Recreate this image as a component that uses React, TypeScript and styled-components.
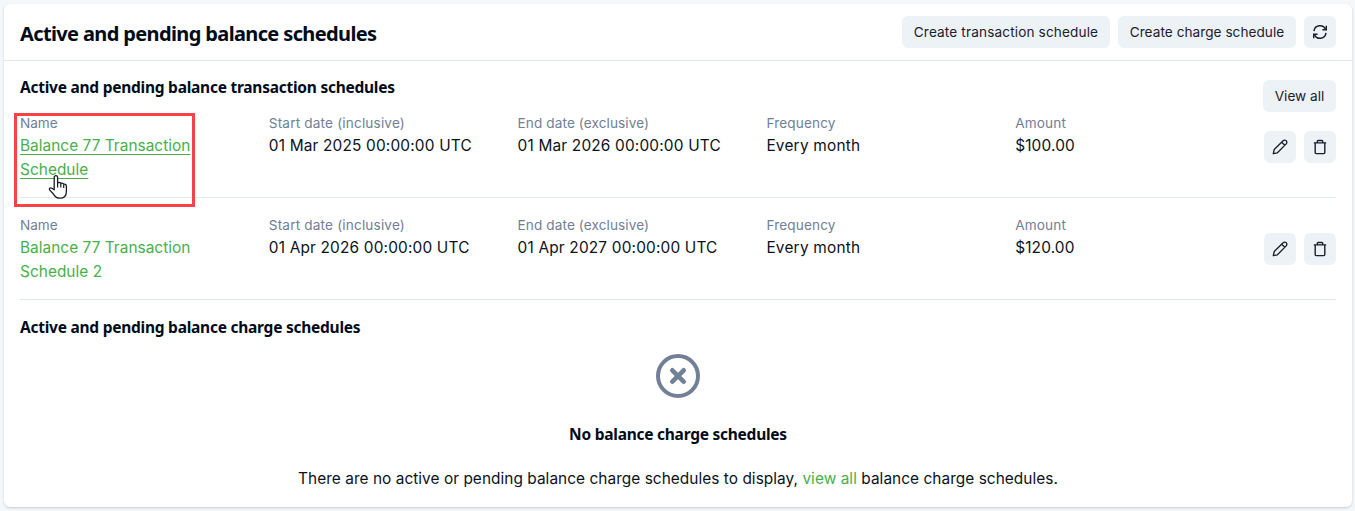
import React from 'react';
import styled, { createGlobalStyle } from 'styled-components';

const Global = createGlobalStyle`
  *, *::before, *::after { box-sizing: border-box; }
  body {
    margin: 0;
    background: #f5f8fb;
    color: #0b1220;
    font: 15.4px/24px Inter, "Liberation Sans", sans-serif;
  }
  h1, h2, h3, p { margin: 0; }
`;

const Page = styled.div`
  height: 511px;
  padding: 4px 3px 4px 4px;
  overflow: hidden;
`;

const Card = styled.section`
  height: 503px;
  background: #fff;
  border-radius: 6px;
  box-shadow: 0 1px 3px rgba(0, 0, 0, 0.12), 0 1px 2px rgba(0, 0, 0, 0.07);
`;

const Header = styled.header`
  display: flex;
  align-items: center;
  justify-content: space-between;
  height: 57px;
  padding: 0 16px;
  border-bottom: 1px solid #e2e8f0;
`;

const Title = styled.h1`
  padding-top: 4px;
  color: #020b1a;
  font: 700 20px/28px "Noto Sans", sans-serif;
  letter-spacing: -0.63px;
  white-space: nowrap;
`;

const Subtitle = styled.h2`
  color: #020b1a;
  font: 700 15.5px/24px "Noto Sans", sans-serif;
  letter-spacing: -0.25px;
  white-space: nowrap;
`;

const Toolbar = styled.div`
  display: flex;
  gap: 8px;
`;

const Button = styled.button<{ $width?: number; $track?: number }>`
  display: inline-flex;
  align-items: center;
  justify-content: center;
  flex: none;
  width: ${(p) => p.$width ?? 32}px;
  height: 32px;
  padding: 0;
  border: 0;
  border-radius: 6px;
  background: #edf2f7;
  color: #1a202c;
  font: 400 13.6px/20px Inter, sans-serif;
  letter-spacing: ${(p) => p.$track ?? 0}px;
  white-space: nowrap;
`;

const Body = styled.div`
  padding: 15px 16px 0;
`;

const SectionHead = styled.div`
  display: flex;
  justify-content: space-between;
  height: 36px;

  ${Subtitle} { line-height: 23px; }
  ${Button} { margin-top: 4px; }
`;

const Row = styled.div<{ $first?: boolean }>`
  display: grid;
  grid-template-columns: repeat(5, 248.8px) 1fr;
  height: ${(p) => (p.$first ? 86 : 102)}px;
  padding-top: ${(p) => (p.$first ? 0 : 16)}px;
  border-bottom: 1px solid #e2e8f0;
`;

const Field = styled.div`
  position: relative;
`;

const Label = styled.div<{ $track: number }>`
  height: 22px;
  font-size: 13.6px;
  line-height: 23px;
  letter-spacing: ${(p) => p.$track}px;
  color: #718096;
`;

const Value = styled.div<{ $track: number }>`
  letter-spacing: ${(p) => p.$track}px;
  white-space: nowrap;
`;

const Link = styled.a<{ $hovered?: boolean }>`
  color: #48b04b;
  text-decoration: ${(p) => (p.$hovered ? 'underline' : 'none')};
  text-decoration-thickness: 1px;
  text-underline-offset: 3px;
  text-decoration-skip-ink: none;
`;

const Actions = styled.div`
  display: flex;
  justify-content: flex-end;
  gap: 8px;
  padding-top: 19px;
`;

const Highlight = styled.div`
  position: absolute;
  left: -6px;
  top: 1px;
  width: 181px;
  height: 94px;
  border: 3px solid #f64244;
`;

const Cursor = styled.svg`
  position: absolute;
  left: 28px;
  top: 62px;
`;

const ChargeHead = styled.div`
  padding-top: 15px;
`;

const Empty = styled.div`
  display: flex;
  flex-direction: column;
  align-items: center;
  padding-top: 15px;

  h2 { margin-top: 24px; }
  p { margin-top: 21px; white-space: nowrap; }
`;

const Message = styled.p`
  letter-spacing: 0.05px;
`;

const RefreshIcon = () => (
  <svg width="16" height="16" viewBox="0 0 16 16" fill="none" stroke="currentColor" strokeWidth="1.45">
    <path d="M2 7.1A6 6 0 0 1 13.5 5.4M14 8.9A6 6 0 0 1 2.5 10.6" />
    <path d="M14.3 1.8v3.9h-3.9M1.7 14.2v-3.9h3.9" />
  </svg>
);

const PencilIcon = () => (
  <svg width="16" height="16" viewBox="0 0 16 16" fill="none" stroke="currentColor" strokeWidth="1.35" strokeLinejoin="round">
    <path d="M1.3 14.7l.9-4.1L11.1 1.8a2.1 2.1 0 0 1 3.1 0 2.1 2.1 0 0 1 0 3.1L5.4 13.8zM9.7 3.2l3.1 3.1" />
  </svg>
);

const TrashIcon = () => (
  <svg width="16" height="16" viewBox="0 0 16 16" fill="none" stroke="currentColor" strokeWidth="1.4" strokeLinejoin="round">
    <path d="M1.8 3.9h12.4M3.2 4v9.6a1 1 0 0 0 1 1h7.6a1 1 0 0 0 1-1V4M5.3 3.8V2.3a.8.8 0 0 1 .8-.8h3.8a.8.8 0 0 1 .8.8v1.5" />
  </svg>
);

const EmptyIcon = () => (
  <svg width="44" height="44" viewBox="0 0 44 44" fill="none" stroke="#718096" strokeWidth="4">
    <circle cx="22" cy="22" r="20" />
    <path d="M16.3 16.3l11.4 11.4M27.7 16.3L16.3 27.7" strokeWidth="4.6" strokeLinecap="round" />
  </svg>
);

const HandCursor = () => (
  <Cursor width="20" height="26" viewBox="0 0 20 26">
    <path
      d="M6.2 15.8V3.3a1.7 1.7 0 0 1 3.4 0v6.1c.2-1.5 3-1.5 3.2.5.4-1.2 2.9-1 3 .8.6-.9 2.6-.5 2.6 1.3v5.2c0 4.3-2.3 7-6.500 7-3.4 0-4.9-1.6-6.3-3.9L1.6 15.9c-.9-1.6 1-2.7 2.3-1.6z"
      fill="#fff"
      stroke="#1b1b2b"
      strokeWidth="1.3"
      strokeLinejoin="round"
    />
    <path d="M9.600 9v4.500M12.800 10v3.500M15.700 11v3" stroke="#1b1b2b" strokeWidth="1.2" />
  </Cursor>
);

interface Schedule {
  lines: string[];
  start: string;
  end: string;
  amount: string;
}

const schedules: Schedule[] = [
  {
    lines: ['Balance 77 Transaction', 'Schedule'],
    start: '01 Mar 2025 00:00:00 UTC',
    end: '01 Mar 2026 00:00:00 UTC',
    amount: '$100.00',
  },
  {
    lines: ['Balance 77 Transaction', 'Schedule 2'],
    start: '01 Apr 2026 00:00:00 UTC',
    end: '01 Apr 2027 00:00:00 UTC',
    amount: '$120.00',
  },
];

const ScheduleRow = ({ item, first }: { item: Schedule; first: boolean }) => (
  <Row $first={first}>
    <Field>
      <Label $track={0}>Name</Label>
      <Value $track={0.04}>
        <Link $hovered={first}>
          {item.lines[0]}
          <br />
          {item.lines[1]}
        </Link>
      </Value>
      {first && <Highlight />}
      {first && <HandCursor />}
    </Field>
    <Field>
      <Label $track={0.17}>Start date (inclusive)</Label>
      <Value $track={0.18}>{item.start}</Value>
    </Field>
    <Field>
      <Label $track={0.1}>End date (exclusive)</Label>
      <Value $track={0.18}>{item.end}</Value>
    </Field>
    <Field>
      <Label $track={0.15}>Frequency</Label>
      <Value $track={0.22}>Every month</Value>
    </Field>
    <Field>
      <Label $track={0.15}>Amount</Label>
      <Value $track={0.15}>{item.amount}</Value>
    </Field>
    <Actions>
      <Button aria-label="Edit"><PencilIcon /></Button>
      <Button aria-label="Delete"><TrashIcon /></Button>
    </Actions>
  </Row>
);

export default function App() {
  return (
    <Page>
      <Global />
      <Card>
        <Header>
          <Title>Active and pending balance schedules</Title>
          <Toolbar>
            <Button $width={208} $track={0.14}>Create transaction schedule</Button>
            <Button $width={178} $track={0.05}>Create charge schedule</Button>
            <Button aria-label="Refresh"><RefreshIcon /></Button>
          </Toolbar>
        </Header>
        <Body>
          <SectionHead>
            <Subtitle>Active and pending balance transaction schedules</Subtitle>
            <Button $width={73}>View all</Button>
          </SectionHead>
          {schedules.map((item, i) => (
            <ScheduleRow key={item.start} item={item} first={i === 0} />
          ))}
          <ChargeHead>
            <Subtitle>Active and pending balance charge schedules</Subtitle>
          </ChargeHead>
          <Empty>
            <EmptyIcon />
            <Subtitle>No balance charge schedules</Subtitle>
            <Message>
              There are no active or pending balance charge schedules to display, <Link>view all</Link> balance
              charge schedules.
            </Message>
          </Empty>
        </Body>
      </Card>
    </Page>
  );
}
